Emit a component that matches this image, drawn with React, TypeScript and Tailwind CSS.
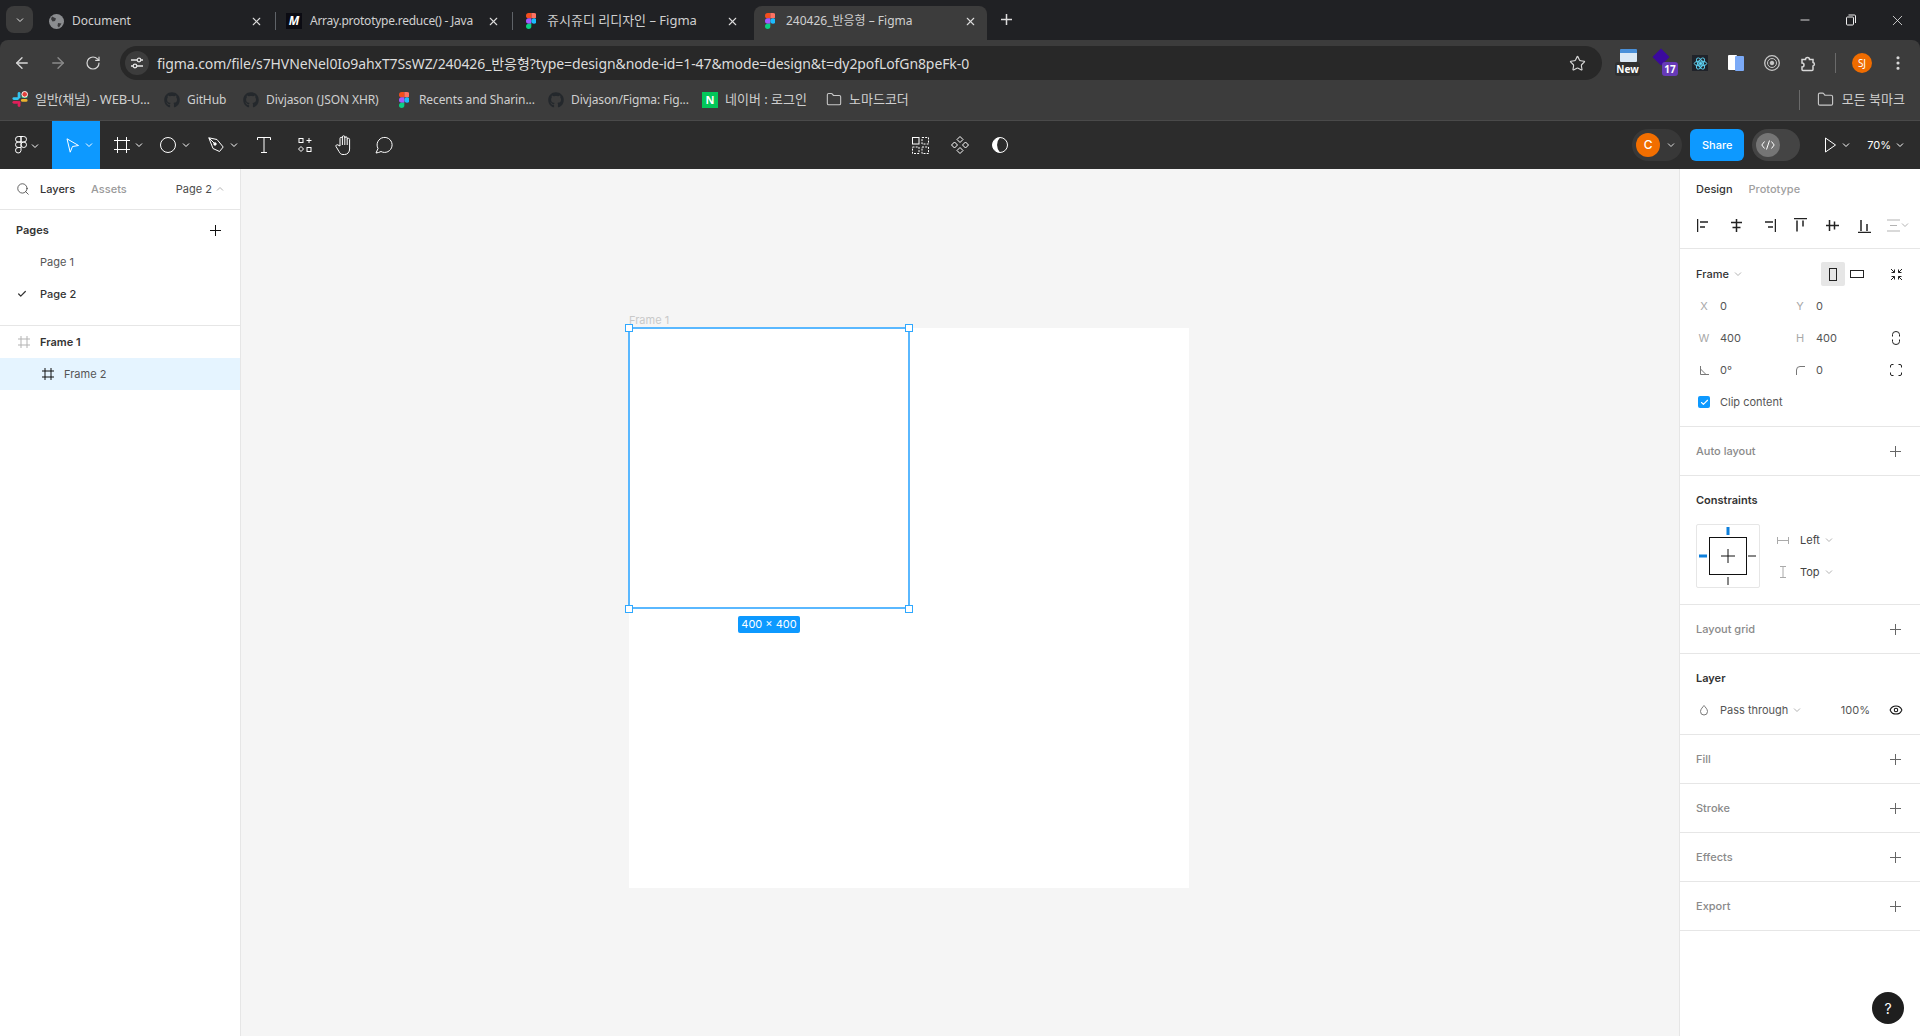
import React from "react";
import { FaGithub } from "react-icons/fa";
import { ArrowLeft, ArrowRight, RotateCw, Star, EllipsisVertical, X, Minus, Folder, Search, Check, Eye } from "lucide-react";

const ui = "font-['Noto_Sans','Noto_Sans_CJK_KR',sans-serif]";
const inter = "font-['Inter','Noto_Sans_CJK_KR',sans-serif]";

function Chevron({ className = "", color = "currentColor", up = false }: { className?: string; color?: string; up?: boolean }) {
  return (
    <svg width="8" height="8" viewBox="0 0 8 8" className={className} fill="none" stroke={color} strokeWidth="1">
      <path d={up ? "M1 5.500 4 2.500 7 5.500" : "M1 2.500 4 5.500 7 2.500"} />
    </svg>
  );
}

function CrossIcon({ className = "" }: { className?: string }) {
  return (
    <svg width="11" height="11" viewBox="0 0 11 11" fill="none" stroke="currentColor" className={className}>
      <path d="M5.500 0v11M0 5.500h11" />
    </svg>
  );
}

function FigmaLogo({ size = 16 }: { size?: number }) {
  return (
    <svg width={(size * 2) / 3} height={size} viewBox="0 0 24 36">
      <path d="M12 0H6a6 6 0 0 0 0 12h6z" fill="#f24e1e" />
      <path d="M12 0h6a6 6 0 0 1 0 12h-6z" fill="#ff7262" />
      <path d="M12 12H6a6 6 0 0 0 0 12h6z" fill="#a259ff" />
      <circle cx="18" cy="18" r="6" fill="#1abcfe" />
      <path d="M6 24h6v6a6 6 0 1 1-6-6z" fill="#0acf83" />
    </svg>
  );
}

function SlackLogo() {
  return (
    <svg width="17" height="17" viewBox="0 0 17 17">
      <rect x="6" y="0.5" width="3" height="7" rx="1.5" fill="#36c5f0" />
      <rect x="0.5" y="6" width="7" height="3" rx="1.5" fill="#36c5f0" />
      <rect x="10" y="4" width="6.5" height="3" rx="1.5" fill="#2eb67d" />
      <rect x="9.5" y="8" width="7" height="3" rx="1.5" fill="#ecb22e" />
      <rect x="0.5" y="10" width="6.5" height="3" rx="1.5" fill="#e01e5a" />
      <rect x="6" y="10" width="3" height="6.5" rx="1.5" fill="#e01e5a" />
      <circle cx="13.5" cy="3" r="3" fill="#e0403a" stroke="#fff" strokeWidth="1" />
    </svg>
  );
}

function GlobeIcon() {
  return (
    <svg width="15" height="15" viewBox="0 0 15 15">
      <circle cx="7.500" cy="7.500" r="7.500" fill="#8b8d90" />
      <path d="M3 2.500 7 4.500 6 7 3.500 7.500 2 5zM9 9 12.500 9.500 10 13.500 8.500 12z" fill="#3a3a3c" />
    </svg>
  );
}

function GitIcon() {
  return <FaGithub size={16} className="text-[#24282c]" />;
}

function Tab({ icon, title, active, className, textClass = "text-[12px]" }: { icon: React.ReactNode; title: string; active?: boolean; className: string; textClass?: string }) {
  return (
    <div className={`${className} h-[34px] flex items-center pb-1 shrink-0 rounded-t-lg ${active ? "bg-[#3c3c3c]" : ""}`}>
      <div className="w-4 h-4 flex items-center justify-center shrink-0">{icon}</div>
      <span className={`ml-2 flex-1 whitespace-nowrap text-[#d0d0d0] ${textClass}`}>{title}</span>
      <X size={13} className="ml-2 text-[#dcdcdc] shrink-0" />
    </div>
  );
}

function Bookmark({ icon, label, width, textClass = "text-[12px] tracking-[-0.1px]" }: { icon: React.ReactNode; label: string; width: string; textClass?: string }) {
  return (
    <div className={`${width} flex items-center gap-[7px] shrink-0`}>
      <div className="w-4 h-4 flex items-center justify-center shrink-0">{icon}</div>
      <span className={`${textClass} text-[#cfcfcf] whitespace-nowrap`}>{label}</span>
    </div>
  );
}

function ToolCell({ children, width = "w-10", active }: { children: React.ReactNode; width?: string; active?: boolean }) {
  return <div className={`${width} h-12 flex items-center justify-center shrink-0 ${active ? "bg-[#0d99ff]" : ""}`}>{children}</div>;
}

function ChromeBars() {
  return (
    <div className={ui}>
      <div className="h-10 bg-[#202124] flex items-end pl-[6px] relative">
        <div className="w-[27px] h-[27px] mb-[7px] rounded-lg bg-[#3c3c3c] flex items-center justify-center shrink-0">
          <Chevron color="#e3e3e3" />
        </div>
        <div className="flex items-center h-[34px] ml-[5px]">
          <Tab className="w-[237px] pl-[10px] pr-3" title="Document" icon={<GlobeIcon />} />
          <div className="w-px h-[18px] mb-1 bg-[#5f6368] shrink-0" />
          <Tab
            className="w-[236px] pl-[10px] pr-3"
            textClass="text-[12px] tracking-[-0.25px]"
            title="Array.prototype.reduce() - Java"
            icon={<div className="w-4 h-4 bg-[#0b0b12] text-white text-[12px] italic font-bold flex items-center justify-center">M</div>}
          />
          <div className="w-px h-[18px] mb-1 bg-[#5f6368] shrink-0" />
          <Tab className="w-[238px] pl-[10px] pr-3" textClass="text-[13px]" title="쥬시쥬디 리디자인 – Figma" icon={<FigmaLogo />} />
          <Tab className="w-[233px] ml-[3px] pl-2 pr-[10px]" active title="240426_반응형 – Figma" icon={<FigmaLogo />} />
        </div>
        <svg width="13" height="13" viewBox="0 0 13 13" fill="none" stroke="#dcdcdc" strokeWidth="1.500" className="ml-[13px] mb-[14px]">
          <path d="M6.500 1v11M1 6.500h11" />
        </svg>
        <div className="ml-auto flex items-center h-10 text-[#f0f0f0]">
          <div className="w-[46px] flex justify-center"><Minus size={14} strokeWidth={1.5} /></div>
          <div className="w-[46px] flex justify-center">
            <svg width="12" height="12" viewBox="0 0 12 12" fill="none" stroke="currentColor"><rect x="1.500" y="3" width="7" height="8" rx="1" /><path d="M3.500 1h6a1 1 0 0 1 1 1v7" /></svg>
          </div>
          <div className="w-[46px] flex justify-center"><X size={17} strokeWidth={1.100} /></div>
        </div>
      </div>

      <div className="h-10 bg-[#3c3c3c] rounded-t-lg flex items-center relative pt-[6px] text-[#d8d8d8]">
        <div className="w-[116px] flex items-center pl-[13px] gap-[18px] shrink-0">
          <ArrowLeft size={18} strokeWidth={1.800} />
          <ArrowRight size={18} strokeWidth={1.800} className="text-[#8a8a8a]" />
          <RotateCw size={16} strokeWidth={1.800} />
        </div>
        <div className="ml-1 w-[1482px] h-[34px] rounded-full bg-[#282828] flex items-center pl-[5px] pr-2 shrink-0">
          <div className="w-6 h-6 rounded-full bg-[#3c3c3c] flex items-center justify-center">
            <svg width="14" height="14" viewBox="0 0 14 14" fill="none" stroke="#e3e3e3" strokeWidth="1.300"><path d="M1 4h6M11 4h2M1 10h2M7 10h6" /><circle cx="9" cy="4" r="1.800" /><circle cx="5" cy="10" r="1.800" /></svg>
          </div>
          <span className="ml-[8px] text-[14px] tracking-[-0.09px] text-[#dcdcdc] whitespace-nowrap">figma.com/file/s7HVNeNel0Io9ahxT7SsWZ/240426_반응형?type=design&node-id=1-47&mode=design&t=dy2pofLofGn8peFk-0</span>
          <Star size={17} strokeWidth={1.600} className="ml-auto mr-[8px]" />
        </div>
        <div className="flex items-center shrink-0 h-[34px]">
          <div className="ml-[13px] w-[30px] h-7 relative shrink-0">
            <div className="absolute left-[5px] top-0 w-[17px] h-[13px] bg-[#dbe9f6] border-t-4 border-[#4a90d9] rounded-[1px]" />
            <div className="absolute left-0 bottom-[1px] w-[25px] h-[14px] rounded-[3px] bg-[#303030] text-white text-[10px] font-bold leading-[14px] text-center">New</div>
          </div>
          <div className="ml-[7px] w-[30px] h-7 relative shrink-0">
            <div className="absolute left-[3px] top-[2px] w-[12px] h-[12px] rotate-45 bg-[#3b0a9e]" />
            <div className="absolute right-[4px] bottom-[1px] w-4 h-[14px] rounded-[3px] bg-[#673ab7] text-white text-[10px] font-bold leading-[14px] text-center">17</div>
          </div>
          <div className="ml-[10px] w-4 h-4 bg-[#20232a] flex items-center justify-center shrink-0">
            <svg width="15" height="15" viewBox="0 0 24 24" fill="none" stroke="#61dafb" strokeWidth="1.500"><circle cx="12" cy="12" r="2" fill="#61dafb" /><ellipse cx="12" cy="12" rx="10" ry="4" /><ellipse cx="12" cy="12" rx="10" ry="4" transform="rotate(60 12 12)" /><ellipse cx="12" cy="12" rx="10" ry="4" transform="rotate(120 12 12)" /></svg>
          </div>
          <div className="ml-[20px] relative w-4 h-4 shrink-0">
            <div className="absolute left-0 top-0 w-[9px] h-[15px] bg-white rounded-[1px]" />
            <div className="absolute right-0 top-[1px] w-[9px] h-[15px] bg-[#7baaf7] rounded-[1px]" />
          </div>
          <div className="ml-[20px] w-4 h-4 shrink-0">
            <svg width="16" height="16" viewBox="0 0 16 16" fill="none" stroke="#c8c8c8"><circle cx="8" cy="8" r="7.300" strokeWidth="1.300" /><circle cx="8" cy="8" r="4.500" /><circle cx="8" cy="8" r="1.800" fill="#c8c8c8" /></svg>
          </div>
          <svg width="17" height="17" viewBox="0 0 17 17" fill="none" stroke="currentColor" strokeWidth="1.500" className="ml-[20px] shrink-0">
            <path d="M2 4.500h3.500a2 2 0 0 1 4 0H13V7.500a1.800 1.800 0 0 1 0 3.500v3.500a1 1 0 0 1-1 1H3a1 1 0 0 1-1-1v-2.500a2 2 0 0 0 0-4z" />
          </svg>
          <div className="ml-[18px] w-px h-5 bg-[#6a6a6a] shrink-0" />
          <div className="ml-[16px] w-5 h-5 rounded-full bg-[#ef6c00] text-white text-[10px] flex items-center justify-center shrink-0">SJ</div>
          <EllipsisVertical size={18} strokeWidth={2.200} className="ml-[17px] shrink-0" />
        </div>
      </div>

      <div className="h-[41px] bg-[#3c3c3c] border-b border-[#4a4a4a] flex items-center pl-3 pb-px">
        <Bookmark width="w-[152px]" textClass="text-[13px] tracking-[-0.2px]" icon={<SlackLogo />} label="일반(채널) - WEB-U..." />
        <Bookmark width="w-[79px]" icon={<GitIcon />} label="GitHub" />
        <Bookmark width="w-[153px]" icon={<GitIcon />} label="Divjason (JSON XHR)" />
        <Bookmark width="w-[152px]" icon={<FigmaLogo />} label="Recents and Sharin..." />
        <Bookmark width="w-[154px]" icon={<GitIcon />} label="Divjason/Figma: Fig..." />
        <Bookmark width="w-[124px]" textClass="text-[13px]" icon={<div className="w-4 h-4 bg-[#03c75a] text-white text-[11px] font-bold leading-4 text-center">N</div>} label="네이버 : 로그인" />
        <Bookmark width="w-[100px]" textClass="text-[13px]" icon={<Folder size={17} strokeWidth={1.600} className="text-[#c8c8c8]" />} label="노마드코더" />
        <div className="ml-auto flex items-center pr-[15px]">
          <div className="w-px h-5 bg-[#6a6a6a] mr-[17px]" />
          <Folder size={17} strokeWidth={1.600} className="text-[#c8c8c8] mr-[8px]" />
          <span className="text-[13px] text-[#cfcfcf]">모든 북마크</span>
        </div>
      </div>
    </div>
  );
}

function FigmaToolbar() {
  return (
    <div className={`${inter} h-12 bg-[#2c2c2c] flex items-center text-white`}>
      <div className="flex-1 flex items-center">
        <div className="w-[52px] h-12 flex items-center pl-[15px] gap-[4px] shrink-0">
          <svg width="12" height="18" viewBox="0 0 24 36" fill="none" stroke="#fff" strokeWidth="2"><path d="M12 1H6.500a5.500 5.500 0 0 0 0 11H12zM12 1h5.500a5.500 5.500 0 0 1 0 11H12zM12 12H6.500a5.500 5.500 0 0 0 0 11H12z" /><circle cx="17.500" cy="17.500" r="5.500" /><path d="M6.500 23H12v6a5.500 5.500 0 1 1-5.500-6z" /></svg>
          <Chevron className="mt-[2px]" />
        </div>
        <ToolCell width="w-12" active>
          <div className="flex items-center gap-[6px] pl-[7px]">
            <svg width="13" height="15" viewBox="0 0 13 15" fill="none" stroke="#fff"><path d="M1 .8 12.500 7.500 6.500 8.500 4.200 14.200z" /></svg>
            <Chevron />
          </div>
        </ToolCell>
        <ToolCell width="w-12">
          <div className="flex items-center gap-[5px] pl-[8px]">
            <svg width="16" height="16" viewBox="0 0 16 16" fill="none" stroke="#fff"><path d="M3.500 0v16M12.500 0v16M0 3.500h16M0 12.500h16" /></svg>
            <Chevron />
          </div>
        </ToolCell>
        <ToolCell width="w-12">
          <div className="flex items-center gap-[6px] pl-[6px]">
            <svg width="16" height="16" viewBox="0 0 16 16" fill="none" stroke="#fff"><circle cx="8" cy="8" r="7.500" /></svg>
            <Chevron />
          </div>
        </ToolCell>
        <ToolCell width="w-12">
          <div className="flex items-center gap-[6px] pl-[6px]">
            <svg width="16" height="16" viewBox="0 0 16 16" fill="none" stroke="#fff"><path d="M.8.800 9 2.500 15.200 10 11.500 14.500 5 11.500zM.8.800 6 6" /><circle cx="7" cy="7" r="1.200" fill="#fff" /></svg>
            <Chevron />
          </div>
        </ToolCell>
        <ToolCell>
          <svg width="14" height="16" viewBox="0 0 14 16" fill="none" stroke="#fff"><path d="M.5 3V.5h13V3M7 .5v15M4 15.500h6" /></svg>
        </ToolCell>
        <ToolCell>
          <svg width="14" height="14" viewBox="0 0 14 14" fill="none" stroke="#fff" className="ml-px"><rect x="1" y=".5" width="4" height="4" /><path d="M11 0v5M8.500 2.500h5" /><rect x="9" y="9.500" width="4" height="4" /><path d="M3 8.500 5.500 11 3 13.500.5 11z" /></svg>
        </ToolCell>
        <ToolCell>
          <svg width="18" height="20" viewBox="0 0 18 20" fill="none" stroke="#fff"><path d="M5 11V3.500a1.200 1.200 0 0 1 2.400 0V2a1.200 1.200 0 0 1 2.400 0v1a1.200 1.200 0 0 1 2.400 0v1.500a1.200 1.200 0 0 1 2.400 0V14c0 3-2 5.500-5 5.500H8c-2 0-3-1-4-3l-3-5c-.6-1 1-2.500 2-1.500zM7.400 3.500v6.500M9.800 3v7M12.200 4.500V10" /></svg>
        </ToolCell>
        <ToolCell>
          <svg width="18" height="18" viewBox="0 0 18 18" fill="none" stroke="#fff"><path d="M1 17 3 12.500A7.500 7.500 0 1 1 6 15.500C4.500 16.200 3 16.800 1 17z" /></svg>
        </ToolCell>
      </div>

      <div className="flex items-center shrink-0">
        <ToolCell>
          <svg width="17" height="17" viewBox="0 0 17 17" fill="none" stroke="#fff"><rect x=".5" y=".5" width="6.500" height="6.500" /><path strokeDasharray="2 1.200" d="M10 .5h6.500V7H10zM.5 10H7v6.500H.5zM10 10h6.500v6.500H10z" /></svg>
        </ToolCell>
        <ToolCell>
          <svg width="18" height="18" viewBox="0 0 18 18" fill="none" stroke="#fff"><path d="M9 .5 12 3.500 9 6.500 6 3.500zM3.500 6 6.500 9 3.500 12 .5 9zM14.500 6 17.500 9 14.500 12 11.500 9zM9 11.500 12 14.500 9 17.500 6 14.500z" /></svg>
        </ToolCell>
        <ToolCell>
          <svg width="16" height="16" viewBox="0 0 16 16"><circle cx="8" cy="8" r="7.500" fill="none" stroke="#fff" /><path d="M8 .5A7.500 7.500 0 0 0 8 15.500 11 11 0 0 1 8 .5z" fill="#fff" /></svg>
        </ToolCell>
      </div>

      <div className="flex-1 flex items-center justify-end text-[11px]">
        <div className="w-[50px] h-8 rounded-full bg-[#383838] flex items-center pl-1 gap-[7px]">
          <div className="w-6 h-6 rounded-full bg-[#f26e00] flex items-center justify-center text-[12px] font-medium">C</div>
          <Chevron className="text-[#ddd]" />
        </div>
        <div className="ml-2 w-[54px] h-8 rounded-md bg-[#0d99ff] flex items-center justify-center font-medium">Share</div>
        <div className="ml-2 w-[48px] h-8 rounded-full bg-[#444] flex items-center pl-1">
          <div className="w-6 h-6 rounded-full bg-[#757575] flex items-center justify-center">
            <svg width="14" height="10" viewBox="0 0 14 10" fill="none" stroke="#fff"><path d="M3.500 1.500 0.800 5 3.500 8.500M10.500 1.500 13.200 5 10.500 8.500M8.500 .5 5.500 9.500" /></svg>
          </div>
        </div>
        <svg width="11" height="16" viewBox="0 0 11 16" fill="none" stroke="#fff" className="ml-[25px]"><path d="M.5 1v14L10.500 8z" /></svg>
        <Chevron className="ml-[6px]" />
        <span className="ml-[17px]">70%</span>
        <Chevron className="ml-[5px] mr-4" />
      </div>
    </div>
  );
}

function HashIcon({ color }: { color: string }) {
  return (
    <svg width="12" height="12" viewBox="0 0 12 12" fill="none" stroke={color}><path d="M3 0v12M9 0v12M0 3h12M0 9h12" /></svg>
  );
}

function LeftPanel() {
  return (
    <aside className={`${inter} w-[241px] shrink-0 bg-white border-r border-[#e6e6e6] text-[11px] text-[#333]`}>
      <div className="h-[41px] border-b border-[#e6e6e6] flex items-center pl-[16px] pr-[16px]">
        <Search size={14} strokeWidth={1.300} className="text-[#333]" />
        <span className="ml-[10px] font-medium">Layers</span>
        <span className="ml-4 text-[#9a9a9a] font-medium">Assets</span>
        <span className="ml-auto text-[#4d4d4d]">Page 2</span>
        <Chevron up className="ml-1 text-[#b3b3b3]" />
      </div>
      <div className="h-[116px] border-b border-[#e6e6e6]">
        <div className="h-9 pt-1 flex items-center pl-4 pr-[19px] font-semibold justify-between">
          <span>Pages</span>
          <CrossIcon className="text-[#111]" />
        </div>
        <div className="h-8 flex items-center pl-10 text-[#555]">Page 1</div>
        <div className="h-8 flex items-center font-medium relative pl-10">
          <Check size={10} strokeWidth={3} className="absolute left-[17px]" />
          Page 2
        </div>
      </div>
      <div className="h-8 flex items-center pl-[18px] font-semibold gap-[10px]">
        <HashIcon color="#b3b3b3" />
        Frame 1
      </div>
      <div className="h-8 flex items-center pl-[42px] gap-[10px] bg-[#e5f4ff] text-[#555]">
        <HashIcon color="#111" />
        Frame 2
      </div>
    </aside>
  );
}

function Canvas() {
  const handle = "absolute w-2 h-2 bg-white border border-[#2fa8ff]";
  return (
    <main className="flex-1 bg-[#f5f5f5] relative overflow-hidden">
      <div className={`${inter} absolute left-[388px] top-[144px] text-[11px] text-[#c9c9c9] leading-[14px]`}>Frame 1</div>
      <div className="absolute left-[388px] top-[159px] w-[560px] h-[560px] bg-white" />
      <div className="absolute left-[387px] top-[158px] w-[282px] h-[282px] border-2 border-[#5ab8ff]" />
      <div className={`${handle} left-[384px] top-[155px]`} />
      <div className={`${handle} left-[664px] top-[155px]`} />
      <div className={`${handle} left-[384px] top-[436px]`} />
      <div className={`${handle} left-[664px] top-[436px]`} />
      <div className={`${inter} absolute left-[497px] top-[447px] w-[62px] h-[17px] rounded-[2px] bg-[#0d99ff] text-white text-[11px] leading-[17px] text-center`}>400 × 400</div>
    </main>
  );
}

function EmptySection({ title }: { title: string }) {
  return (
    <div className="h-[49px] border-b border-[#e6e6e6] flex items-center justify-between pl-4 pr-[19px]">
      <span className="font-medium text-[#8a8a8a]">{title}</span>
      <CrossIcon className="text-[#666]" />
    </div>
  );
}

function Field({ label, value, width }: { label: React.ReactNode; value: string; width: string }) {
  return (
    <div className={`${width} flex items-center shrink-0`}>
      <span className="w-[16px] text-center text-[#a8a8a8] flex justify-center">{label}</span>
      <span className="ml-2 text-[#555]">{value}</span>
    </div>
  );
}

function RightPanel() {
  return (
    <aside className={`${inter} w-[241px] shrink-0 bg-white border-l border-[#e6e6e6] text-[11px] text-[#333] relative`}>
      <div className="h-20 border-b border-[#e6e6e6]">
        <div className="h-10 flex items-center pl-4 gap-4 font-medium">
          <span>Design</span>
          <span className="text-[#a0a0a0]">Prototype</span>
        </div>
        <div className="h-10 flex items-center pl-[17px] text-[#222] pb-[8px]">
          {[
            "M.5 1v13M3 4h8M3 9h5",
            "M7.500 1v13M2 4.500h11M3.500 9.500h8",
            "M14.500 1v13M4 4h8M7 9h5",
            "M1 .5h13M4 2.500v11M10 2.500v6",
            "M1 7.500h13M4.500 2v11M9.500 3.500v8",
            "M1 14.500h13M4 2v11M10 6v7",
          ].map((d, i) => (
            <div key={i} className="w-8 flex shrink-0">
              <svg width="15" height="15" viewBox="0 0 15 15" fill="none" stroke="currentColor"><path d={d} strokeWidth="1.500" /></svg>
            </div>
          ))}
          <svg width="13" height="13" viewBox="0 0 13 13" fill="none" stroke="#b3b3b3" className="-ml-[2px]"><path d="M0 1h13M3 6.500h7M0 12h13" /></svg>
          <Chevron className="ml-[1px] text-[#b3b3b3]" />
        </div>
      </div>

      <div className="h-[178px] border-b border-[#e6e6e6] pt-[9px]">
        <div className="h-8 flex items-center pl-4 pr-[17px] relative">
          <span className="font-medium">Frame</span>
          <Chevron className="ml-[5px] text-[#b3b3b3]" />
          <div className="ml-auto w-6 h-6 rounded-[2px] bg-[#e6e6e6] flex items-center justify-center mr-[5px]">
            <div className="w-2 h-[13px] border border-[#222]" />
          </div>
          <div className="w-[14px] h-[8px] border border-[#222] mr-[26px]" />
          <svg width="13" height="13" viewBox="0 0 13 13" fill="none" stroke="#222"><path d="M1 1l3.500 3.500M4.500 1.500v3h-3M12 1 8.500 4.500M8.500 1.500v3h3M1 12l3.500-3.500M1.500 8.500h3v3M12 12 8.500 8.500M8.500 11.500v-3h3" /></svg>
        </div>
        <div className="h-8 flex items-center pl-4">
          <Field width="w-24" label="X" value="0" />
          <Field width="w-24" label="Y" value="0" />
        </div>
        <div className="h-8 flex items-center pl-4 relative">
          <Field width="w-24" label="W" value="400" />
          <Field width="w-24" label="H" value="400" />
          <svg width="8" height="14" viewBox="0 0 8 14" fill="none" stroke="#222" className="ml-[4px]"><path d="M.5 5.500V3.500a3.500 3 0 0 1 7 0v2M.5 8.500v2a3.500 3 0 0 0 7 0v-2" /></svg>
        </div>
        <div className="h-8 flex items-center pl-4">
          <Field width="w-24" label={<svg width="9" height="9" viewBox="0 0 9 9" fill="none" stroke="#777"><path d="M.5 0v8.500H9M.5 3 6 8.500" /></svg>} value="0°" />
          <Field width="w-24" label={<svg width="9" height="9" viewBox="0 0 9 9" fill="none" stroke="#777"><path d="M.5 9V4A3.500 3.500 0 0 1 4 .5h5" /></svg>} value="0" />
          <svg width="12" height="12" viewBox="0 0 12 12" fill="none" stroke="#222" className="ml-[2px]"><path d="M.5 3.500V2A1.500 1.500 0 0 1 2 .5h1.500M8.500.5H10A1.500 1.500 0 0 1 11.500 2v1.500M11.500 8.500V10A1.500 1.500 0 0 1 10 11.500H8.500M3.500 11.500H2A1.500 1.500 0 0 1 .500 10V8.500" /></svg>
        </div>
        <div className="h-8 flex items-center pl-[18px]">
          <div className="w-3 h-3 rounded-[2px] bg-[#0d99ff] flex items-center justify-center">
            <Check size={9} strokeWidth={3} className="text-white" />
          </div>
          <span className="ml-[10px] text-[#555]">Clip content</span>
        </div>
      </div>

      <EmptySection title="Auto layout" />

      <div className="h-[129px] border-b border-[#e6e6e6] pl-4">
        <div className="h-[48px] flex items-center font-semibold">Constraints</div>
        <div className="flex">
          <div className="w-16 h-16 border border-[#e6e6e6] rounded-[2px] relative shrink-0">
            <svg width="62" height="62" viewBox="0 0 62 62" fill="none" stroke="#111">
              <rect x="12.500" y="12.500" width="37" height="37" />
              <path d="M31 24v14M24 31h14" />
              <path d="M31 52v8M51 31h8" />
              <path d="M31 2v8M2 31h8" stroke="#0d7fdc" strokeWidth="3" />
            </svg>
          </div>
          <div className="ml-[17px] text-[#444] flex flex-col">
            <div className="h-8 flex items-center">
              <svg width="12" height="7" viewBox="0 0 12 7" fill="none" stroke="#aaa"><path d="M.5 0v7M11.500 0v7M1 3.500h10" /></svg>
              <span className="ml-[11px]">Left</span>
              <Chevron className="ml-[5px] text-[#b3b3b3]" />
            </div>
            <div className="h-8 flex items-center">
              <svg width="12" height="12" viewBox="0 0 12 12" fill="none" stroke="#aaa"><path d="M3 .5h6M3 11.500h6M6 1v10" /></svg>
              <span className="ml-[11px]">Top</span>
              <Chevron className="ml-[5px] text-[#b3b3b3]" />
            </div>
          </div>
        </div>
      </div>

      <EmptySection title="Layout grid" />

      <div className="h-[81px] border-b border-[#e6e6e6]">
        <div className="h-[44px] pt-1 flex items-center pl-4 font-semibold">Layer</div>
        <div className="h-6 flex items-center pl-[20px] text-[#555]">
          <svg width="8" height="11" viewBox="0 0 8 11" fill="none" stroke="#777"><path d="M4 .5c1 1.500 3.500 3.500 3.500 6a3.500 3.500 0 0 1-7 0C.5 4 3 2 4 .5z" /></svg>
          <span className="ml-[12px]">Pass through</span>
          <Chevron className="ml-[5px] text-[#b3b3b3]" />
          <span className="ml-auto">100%</span>
          <Eye size={14} strokeWidth={1.800} className="ml-[19px] mr-[17px] text-[#111]" />
        </div>
      </div>

      <EmptySection title="Fill" />
      <EmptySection title="Stroke" />
      <EmptySection title="Effects" />
      <EmptySection title="Export" />

      <div className="absolute right-[16px] bottom-[12px] w-8 h-8 rounded-full bg-[#1e1e1e] text-white text-[14px] flex items-center justify-center">?</div>
    </aside>
  );
}

export default function App() {
  return (
    <div className="w-[1920px] h-[1036px] flex flex-col overflow-hidden bg-[#202124]">
      <ChromeBars />
      <FigmaToolbar />
      <div className="flex-1 flex min-h-0">
        <LeftPanel />
        <Canvas />
        <RightPanel />
      </div>
    </div>
  );
}
